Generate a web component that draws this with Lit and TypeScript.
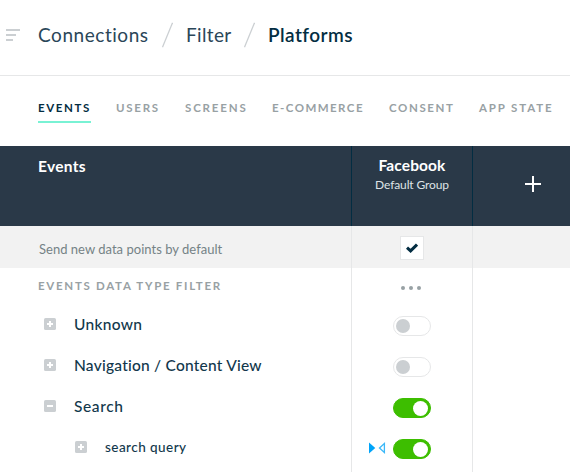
import { LitElement, html, css, svg, nothing } from "lit";
import { customElement, property } from "lit/decorators.js";
import { classMap } from "lit/directives/class-map.js";

interface FilterRow {
  label: string;
  kind: string;
  open: boolean;
  on: boolean;
  child: boolean;
}

const TABS = [
  { label: "Events", kind: "events" },
  { label: "Users", kind: "users" },
  { label: "Screens", kind: "screens" },
  { label: "E-Commerce", kind: "commerce" },
  { label: "Consent", kind: "consent" },
  { label: "App State", kind: "state" },
];

const ROWS: FilterRow[] = [
  { label: "Unknown", kind: "unknown", open: false, on: false, child: false },
  { label: "Navigation / Content View", kind: "navigation", open: false, on: false, child: false },
  { label: "Search", kind: "search", open: true, on: true, child: false },
  { label: "search query", kind: "query", open: false, on: true, child: true },
];

@customElement("toggle-switch")
export class ToggleSwitch extends LitElement {
  @property({ type: Boolean, reflect: true }) on = false;

  static styles = css`
    :host {
      box-sizing: border-box;
      display: flex;
      align-items: center;
      width: 38px;
      height: 20px;
      padding: 0 2px;
      border: 1px solid #e6e7e8;
      border-radius: 10px;
      background: #fff;
    }
    :host([on]) {
      justify-content: flex-end;
      border-color: #3dbe00;
      background: #3dbe00;
    }
    .knob {
      width: 14px;
      height: 14px;
      border-radius: 50%;
      background: #cbcfd2;
    }
    :host([on]) .knob {
      width: 15px;
      height: 15px;
      background: #fff;
    }
  `;

  render() {
    return html`<span class="knob"></span>`;
  }
}

@customElement("expand-icon")
export class ExpandIcon extends LitElement {
  @property({ type: Boolean }) open = false;

  static styles = css`
    :host {
      display: block;
      width: 12px;
      height: 12px;
    }
    svg {
      display: block;
    }
  `;

  render() {
    return html`<svg width="12" height="12" viewBox="0 0 12 12">
      <rect width="12" height="12" rx="1.6" fill="#cbcfd2" />
      <path d="M3 5h6v2H3z" fill="#fff" />
      ${this.open ? nothing : svg`<path d="M5 3h2v6H5z" fill="#fff" />`}
    </svg>`;
  }
}

@customElement("app-root")
export class AppRoot extends LitElement {
  static styles = css`
    :host {
      display: flex;
      flex-direction: column;
      height: 472px;
      overflow: hidden;
      background: #fff;
      color: #032d42;
      font-family: Lato, "Open Sans", sans-serif;
      white-space: nowrap;
    }
    svg {
      display: block;
      flex: none;
    }
    .top {
      box-sizing: border-box;
      display: flex;
      align-items: center;
      height: 76px;
      padding: 0 0 5px 6px;
      border-bottom: 1px solid #e6e7e8;
      font-size: 19px;
      line-height: 24px;
    }
    .menu {
      width: 32px;
    }
    .crumb {
      color: #2a4658;
    }
    .connections {
      width: 124px;
      letter-spacing: 0.55px;
    }
    .filter {
      width: 58px;
      margin-left: 13px;
      letter-spacing: 0.35px;
    }
    .current {
      margin-left: 13px;
      color: #032d42;
      font-weight: 600;
      letter-spacing: 0.45px;
    }
    .tabs {
      display: flex;
      box-sizing: border-box;
      height: 70px;
      padding: 24px 0 0 38px;
      gap: 25px;
      font-size: 11.5px;
      font-weight: 700;
      line-height: 16px;
      letter-spacing: 1.75px;
      text-transform: uppercase;
      color: #98a1a4;
    }
    .tab {
      box-sizing: border-box;
      height: 23px;
      border-bottom: 2px solid transparent;
    }
    .tab.events { width: 53px; letter-spacing: 1.6px; }
    .tab.users { width: 44px; }
    .tab.screens { width: 62px; letter-spacing: 1.85px; }
    .tab.commerce { width: 92px; letter-spacing: 1.45px; }
    .tab.consent { width: 65px; letter-spacing: 1.6px; }
    .tab.state { letter-spacing: 1.85px; }
    .tab.active {
      color: #032d42;
      border-color: #79f2d4;
    }
    .line {
      display: grid;
      grid-template-columns: 351px 121px 1fr;
      flex: none;
      height: 41px;
    }
    .line.rest {
      flex: 1;
      height: auto;
    }
    .cell {
      box-sizing: border-box;
      display: flex;
      align-items: center;
      justify-content: center;
      border-left: 1px solid #e6e7e8;
      min-width: 0;
    }
    .cell.name {
      justify-content: flex-start;
      border-left: 0;
      padding-left: 38px;
    }
    .head {
      height: 80px;
      background: #2a3948;
      color: #fff;
    }
    .head .cell {
      border-color: #032d42;
    }
    .head .name {
      align-items: flex-start;
      padding-top: 10px;
      font-size: 15.5px;
      font-weight: 700;
      line-height: 20px;
      letter-spacing: 0.3px;
    }
    .head .group {
      flex-direction: column;
      justify-content: flex-start;
      padding-top: 9px;
    }
    .platform {
      font-size: 15.5px;
      font-weight: 700;
      line-height: 20px;
      letter-spacing: 0.1px;
    }
    .sub {
      margin-top: 1px;
      font-size: 12px;
      line-height: 18px;
      letter-spacing: -0.12px;
      color: #dfe3e6;
    }
    .head .add {
      justify-content: flex-start;
      padding: 0 0 4px 52px;
    }
    .defaults {
      height: 42px;
      background: #f2f2f2;
      color: #758286;
      font-size: 13px;
    }
    .defaults .name {
      padding: 3px 0 0 39px;
      letter-spacing: 0.02px;
    }
    .check {
      box-sizing: border-box;
      display: flex;
      align-items: center;
      justify-content: center;
      width: 24px;
      height: 24px;
      margin-top: 2px;
      border: 1px solid #e6e7e8;
      background: #fff;
    }
    .section {
      height: 37px;
    }
    .section .name {
      padding-bottom: 2px;
      font-size: 11.5px;
      font-weight: 700;
      letter-spacing: 1.71px;
      color: #98a1a4;
    }
    .section svg {
      margin: 3px 2px 0 0;
    }
    .row .name {
      gap: 18px;
      padding-left: 44px;
      color: #12384c;
      font-size: 15.5px;
      font-weight: 500;
      line-height: 20px;
      letter-spacing: 0.23px;
    }
    .row .label {
      margin-bottom: 3px;
    }
    .label.unknown {
      letter-spacing: 0.3px;
    }
    .label.search {
      letter-spacing: 0.6px;
    }
    .row.child .name {
      padding-left: 75px;
      font-size: 13.5px;
      letter-spacing: 0.45px;
    }
    .row expand-icon {
      margin-bottom: 3px;
    }
    .row toggle-switch {
      margin-top: 1px;
    }
    .row .group {
      position: relative;
    }
    .sync {
      position: absolute;
      left: 17px;
      top: 14px;
    }
  `;

  private slash() {
    return html`<svg width="11" height="26" viewBox="0 0 11 26">
      <path d="M0.5 25.2 10.5 0.8" stroke="#cbcfd2" stroke-width="1.2" />
    </svg>`;
  }

  private row(r: FilterRow) {
    return html`<div class=${classMap({ line: true, row: true, child: r.child })}>
      <div class="cell name">
        <expand-icon .open=${r.open}></expand-icon>
        <span class="label ${r.kind}">${r.label}</span>
      </div>
      <div class="cell group">
        ${r.child
          ? html`<svg class="sync" width="17" height="12" viewBox="0 0 17 12">
              <path d="M0 0.5 6.3 6 0 11.5z" fill="#00a4f9" />
              <path d="M15.4 1.5 10.5 6l4.9 4.5z" fill="#fff" stroke="#3cb8f8" stroke-width="1.3" />
            </svg>`
          : nothing}
        <toggle-switch ?on=${r.on}></toggle-switch>
      </div>
      <div class="cell"></div>
    </div>`;
  }

  render() {
    return html`
      <div class="top">
        <svg class="menu" width="32" height="12" viewBox="0 0 32 12">
          <path d="M0 0h14v2H0zM0 5h10v2H0zM0 10h7v2H0z" fill="#cbcfd2" />
        </svg>
        <span class="crumb connections">Connections</span>
        ${this.slash()}
        <span class="crumb filter">Filter</span>
        ${this.slash()}
        <span class="current">Platforms</span>
      </div>
      <div class="tabs">
        ${TABS.map((t, i) => html`<span class="tab ${t.kind} ${i === 0 ? "active" : ""}">${t.label}</span>`)}
      </div>
      <div class="line head">
        <div class="cell name"><span class="title">Events</span></div>
        <div class="cell group">
          <span class="platform">Facebook</span>
          <span class="sub">Default Group</span>
        </div>
        <div class="cell add">
          <svg width="16" height="16" viewBox="0 0 16 16">
            <path d="M0 7h16v2H0zM7 0h2v16H7z" fill="#fff" />
          </svg>
        </div>
      </div>
      <div class="line defaults">
        <div class="cell name"><span class="send">Send new data points by default</span></div>
        <div class="cell">
          <span class="check">
            <svg width="12" height="10" viewBox="0 0 12 10">
              <path d="M1 4.6 4.6 7.9 11 1.6" fill="none" stroke="#032d42" stroke-width="3" />
            </svg>
          </span>
        </div>
        <div class="cell"></div>
      </div>
      <div class="line section">
        <div class="cell name"><span>EVENTS DATA TYPE FILTER</span></div>
        <div class="cell">
          <svg width="20" height="4" viewBox="0 0 20 4" fill="#98a1a4">
            <circle cx="2" cy="2" r="2" />
            <circle cx="10" cy="2" r="2" />
            <circle cx="18" cy="2" r="2" />
          </svg>
        </div>
        <div class="cell"></div>
      </div>
      ${ROWS.map((r) => this.row(r))}
      <div class="line rest">
        <div></div>
        <div class="cell"></div>
        <div class="cell"></div>
      </div>
    `;
  }
}
